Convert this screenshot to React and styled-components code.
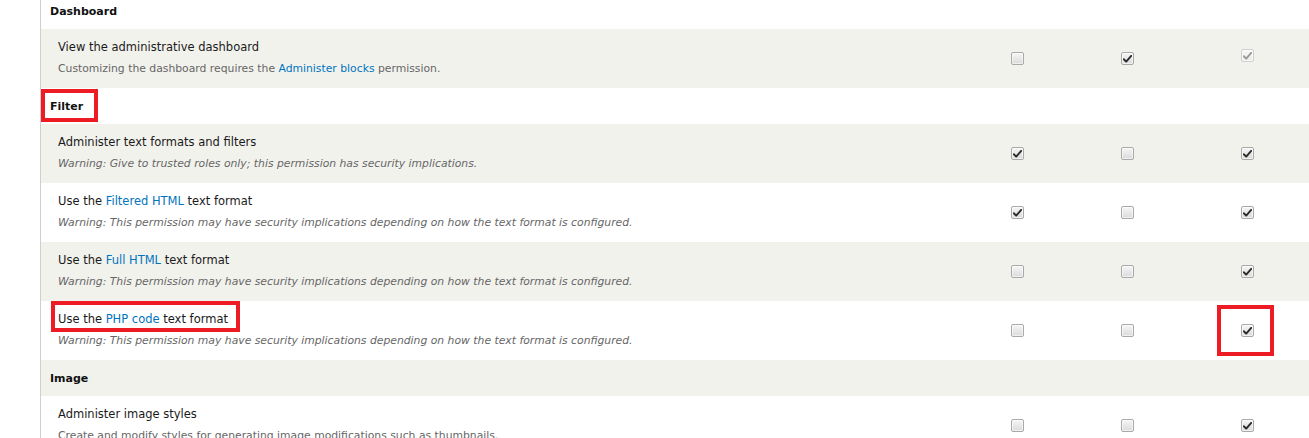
import styled, { createGlobalStyle } from "styled-components";

const GlobalStyle = createGlobalStyle`
  html, body {
    margin: 0;
    padding: 0;
    background: #fff;
    overflow: hidden;
  }
  body {
    font-family: "DejaVu Sans", Verdana, sans-serif;
    color: #222;
  }
`

const Page = styled.div`
  width: 1309px;
  height: 438px;
  overflow: hidden;
  padding-left: 40px;
  box-sizing: border-box;
`
const Table = styled.div`
  width: 1268px;
  margin-top: -7px;
  border-left: 1px solid #cfcfcf;
  border-right: 1px solid #dcdcdc;
`
const Row = styled.div`
  display: flex;
  align-items: center;
  height: ${p => (p.$module ? "36px" : "59px")};
  background: ${p => (p.$even ? "#f2f2ed" : "#fff")};
`
const ModuleName = styled.div`
  flex: 1;
  padding-left: 9px;
  font-size: 11px;
  font-weight: 700;
  color: #111;
`
const PermCell = styled.div`
  flex: 1;
  padding-left: 17px;
  padding-bottom: 2px;
`
const PermTitle = styled.div`
  font-size: 11.5px;
  line-height: 16px;
  color: #1a1a1a;
`
const PermDesc = styled.div`
  margin-top: 7px;
  font-size: 10.8px;
  line-height: 14px;
  color: #666;
  font-style: ${p => (p.$warning ? "italic" : "normal")};
`
const Link = styled.a`
  color: #0074bd;
  text-decoration: none;
`
const CheckCell = styled.div`
  width: ${p => p.$w}px;
  display: flex;
  justify-content: center;
`
const Box = styled.span`
  position: relative;
  display: flex;
  align-items: center;
  justify-content: center;
  width: 11px;
  height: 11px;
  margin-top: ${p => (p.$disabled ? "-6px" : "0")};
  border: 1px solid ${p => (p.$disabled ? "#cfcfcf" : "#a9a9a9")};
  border-radius: 2px;
  background: ${p => (p.$disabled ? "linear-gradient(#f7f7f7, #ececec)" : "linear-gradient(#f6f6f6, #dadada)")};
  box-shadow: inset 0 0 0 1px rgba(255, 255, 255, 0.6);
`
const Marker = styled.span`
  position: relative;
  display: inline-block;
`
const Annotation = styled.span`
  position: absolute;
  top: ${p => p.$t}px;
  right: ${p => p.$r}px;
  bottom: ${p => p.$b}px;
  left: ${p => p.$l}px;
  border: 4px solid #ed1c24;
  pointer-events: none;
`

const Check = ({ on, disabled }) => (
  <Box $disabled={disabled}>
    {on && (
      <svg width="9" height="8" viewBox="0 0 9 8">
        <path
          d="M0.8 4.3 L3.2 6.6 L8.2 0.9"
          fill="none"
          stroke={disabled ? "#9a9a9a" : "#2b2b2b"}
          strokeWidth="1.9"
          strokeLinecap="round"
          strokeLinejoin="round"
        />
      </svg>
    )}
  </Box>
)

const widths = [102, 118, 123]

const Checks = ({ values, disabledLast, markLast }) => (
  <>
    {values.map((v, i) => {
      const box = <Check on={v} disabled={disabledLast && i === 2} />
      return (
        <CheckCell key={i} $w={widths[i]}>
          {markLast && i === 2 ? (
            <Marker>
              {box}
              <Annotation $t={-19} $r={-20} $b={-19} $l={-24} />
            </Marker>
          ) : box}
        </CheckCell>
      )
    })}
  </>
)

const warn = "Warning: This permission may have security implications depending on how the text format is configured."

const App = () => {
  return (
    <Page>
      <GlobalStyle />
      <Table>
        <Row $module>
          <ModuleName>Dashboard</ModuleName>
        </Row>
        <Row $even>
          <PermCell>
            <PermTitle>View the administrative dashboard</PermTitle>
            <PermDesc>
              Customizing the dashboard requires the <Link>Administer blocks</Link> permission.
            </PermDesc>
          </PermCell>
          <Checks values={[false, true, true]} disabledLast />
        </Row>
        <Row $module>
          <ModuleName>
            <Marker>
              Filter
              <Annotation $t={-11} $r={-15} $b={-9} $l={-9} />
            </Marker>
          </ModuleName>
        </Row>
        <Row $even>
          <PermCell>
            <PermTitle>Administer text formats and filters</PermTitle>
            <PermDesc $warning>Warning: Give to trusted roles only; this permission has security implications.</PermDesc>
          </PermCell>
          <Checks values={[true, false, true]} />
        </Row>
        <Row>
          <PermCell>
            <PermTitle>Use the <Link>Filtered HTML</Link> text format</PermTitle>
            <PermDesc $warning>{warn}</PermDesc>
          </PermCell>
          <Checks values={[true, false, true]} />
        </Row>
        <Row $even>
          <PermCell>
            <PermTitle>Use the <Link>Full HTML</Link> text format</PermTitle>
            <PermDesc $warning>{warn}</PermDesc>
          </PermCell>
          <Checks values={[false, false, true]} />
        </Row>
        <Row>
          <PermCell>
            <PermTitle>
              <Marker>
                Use the <Link>PHP code</Link> text format
                <Annotation $t={-10} $r={-12} $b={-5} $l={-7} />
              </Marker>
            </PermTitle>
            <PermDesc $warning>{warn}</PermDesc>
          </PermCell>
          <Checks values={[false, false, true]} markLast />
        </Row>
        <Row $module $even>
          <ModuleName>Image</ModuleName>
        </Row>
        <Row>
          <PermCell>
            <PermTitle>Administer image styles</PermTitle>
            <PermDesc>Create and modify styles for generating image modifications such as thumbnails.</PermDesc>
          </PermCell>
          <Checks values={[false, false, true]} />
        </Row>
      </Table>
    </Page>
  );
}

export default App;
